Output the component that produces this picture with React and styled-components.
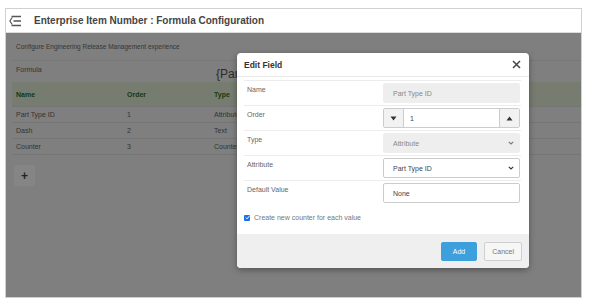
import React from 'react'
import styled, { createGlobalStyle } from 'styled-components'

const GlobalStyle = createGlobalStyle`
  html, body {
    margin: 0;
    padding: 0;
    background: #ffffff;
    font-family: "Liberation Sans", Arial, sans-serif;
  }
`

const Frame = styled.div`
  position: relative;
  margin: 8px 0 0 5px;
  width: 575px;
  height: 288px;
  border: 1px solid #d0d0d0;
  display: flex;
  flex-direction: column;
  overflow: hidden;
`

const TopBar = styled.div`
  height: 23px;
  flex-shrink: 0;
  display: flex;
  align-items: center;
  gap: 12px;
  padding-left: 3px;
  background: #ffffff;
  border-bottom: 1px solid #dcdcdc;
`

const Title = styled.h1`
  margin: 0;
  font-size: 10px;
  font-weight: bold;
  color: #444;
`

const Content = styled.div`
  position: relative;
  flex: 1;
  background: #f3f3f3;
  padding: 10px 0 0 6px;
`

const Subtitle = styled.div`
  font-size: 6.5px;
  color: #6a6a6a;
  padding-left: 4px;
  margin-bottom: 10px;
`

const FormulaRow = styled.div`
  display: flex;
  align-items: flex-start;
  height: 21px;
  border-top: 1px solid #e6e6e6;
  padding-left: 4px;
`

const FormulaLabel = styled.div`
  width: 200px;
  font-size: 7px;
  color: #666;
  padding-top: 5px;
`

const FormulaValue = styled.div`
  font-size: 12px;
  color: #555;
  padding-top: 6px;
`

const Table = styled.div`
  display: flex;
  flex-direction: column;
`

const Row = styled.div`
  display: grid;
  grid-template-columns: 111px 87px 1fr;
  align-items: center;
  height: ${p => (p.$head ? 24 : 15)}px;
  padding-left: 4px;
  font-size: 7px;
  color: ${p => (p.$head ? '#2f6f1e' : '#666')};
  font-weight: ${p => (p.$head ? 'bold' : 'normal')};
  background: ${p => (p.$head ? '#e2efd6' : 'transparent')};
  border-bottom: 1px solid #e0e0e0;
`

const AddRowButton = styled.div`
  width: 21px;
  height: 21px;
  margin: 10px 0 0 2px;
  display: flex;
  align-items: center;
  justify-content: center;
  background: #ffffff;
  border-radius: 2px;
  font-size: 12px;
  font-weight: bold;
  color: #444;
`

const Overlay = styled.div`
  position: absolute;
  inset: 0;
  background: rgba(0, 0, 0, 0.48);
`

const Modal = styled.div`
  position: absolute;
  left: 231px;
  top: 20px;
  width: 292px;
  height: 215px;
  background: #ffffff;
  border-radius: 4px;
  box-shadow: 0 2px 6px rgba(0, 0, 0, 0.35);
  display: flex;
  flex-direction: column;
  overflow: hidden;
`

const ModalHeader = styled.div`
  height: 23px;
  flex-shrink: 0;
  display: flex;
  align-items: center;
  justify-content: space-between;
  padding: 0 8px 0 7px;
  border-bottom: 1px solid #e8e8e8;
`

const ModalTitle = styled.div`
  font-size: 8.5px;
  font-weight: bold;
  color: #333;
`

const ModalBody = styled.div`
  flex: 1;
  padding: 3px 8px 0 7px;
`

const FieldRow = styled.div`
  display: flex;
  justify-content: space-between;
  height: 25px;
  padding: 2px 1px 0 3px;
  box-sizing: border-box;
  border-top: 1px solid #ececec;
`

const FieldLabel = styled.div`
  font-size: 7px;
  color: #666;
  padding-top: 3px;
`

const Field = styled.div`
  width: 137px;
  height: 20px;
  box-sizing: border-box;
  display: flex;
  align-items: center;
  justify-content: space-between;
  padding: 0 5px 0 9px;
  font-size: 7px;
  border-radius: 2px;
  color: ${p => (p.$disabled ? '#888' : '#444')};
  background: ${p => (p.$disabled ? '#eeeeee' : '#ffffff')};
  border: 1px solid ${p => (p.$disabled ? '#eeeeee' : '#cccccc')};
`

const Spinner = styled.div`
  width: 137px;
  height: 20px;
  box-sizing: border-box;
  display: flex;
  border: 1px solid #cccccc;
  border-radius: 2px;
  overflow: hidden;
`

const SpinButton = styled.div`
  width: 19px;
  display: flex;
  align-items: center;
  justify-content: center;
  background: #f2f2f2;
  border-${p => p.$side}: 1px solid #cccccc;
`

const SpinInput = styled.div`
  flex: 1;
  display: flex;
  align-items: center;
  padding-left: 6px;
  font-size: 7px;
  color: #444;
`

const CheckLine = styled.label`
  display: flex;
  align-items: center;
  gap: 4px;
  margin-top: 9px;
  font-size: 7px;
  color: #777;
`

const CheckBox = styled.span`
  width: 6px;
  height: 6px;
  border-radius: 1px;
  background: #1a73e8;
  display: flex;
  align-items: center;
  justify-content: center;
`

const ModalFooter = styled.div`
  height: 34px;
  flex-shrink: 0;
  display: flex;
  align-items: center;
  justify-content: flex-end;
  gap: 7px;
  padding-right: 7px;
  background: #efefef;
`

const Button = styled.div`
  height: 19px;
  padding: 0 ${p => (p.$primary ? 11 : 7)}px;
  display: flex;
  align-items: center;
  border-radius: 2px;
  font-size: 7px;
  box-sizing: border-box;
  color: ${p => (p.$primary ? '#ffffff' : '#777')};
  background: ${p => (p.$primary ? '#3d9fdb' : '#f6f6f6')};
  border: 1px solid ${p => (p.$primary ? '#3d9fdb' : '#cfcfcf')};
`

const Chevron = ({ color }) => (
  <svg width="6" height="4" viewBox="0 0 6 4">
    <path d="M0.8 0.8 L3 3 L5.2 0.8" fill="none" stroke={color} strokeWidth="1.1" />
  </svg>
)

const Tri = ({ up }) => (
  <svg width="7" height="5" viewBox="0 0 7 5">
    <path d={up ? 'M3.5 0.5 L6.5 4.5 L0.5 4.5 Z' : 'M0.5 0.5 L6.5 0.5 L3.5 4.5 Z'} fill="#333" />
  </svg>
)

const MenuIcon = () => (
  <svg width="13" height="12" viewBox="0 0 13 12">
    <path d="M3.2 2.5 L0.9 6 L3.2 9.5" fill="none" stroke="#555" strokeWidth="1.2" />
    <path d="M2.5 1.5 H12 M4.5 6 H12 M2.5 10.5 H12" fill="none" stroke="#555" strokeWidth="1.3" />
  </svg>
)

const CloseIcon = () => (
  <svg width="9" height="9" viewBox="0 0 9 9">
    <path d="M1 1 L8 8 M8 1 L1 8" stroke="#444" strokeWidth="1.5" />
  </svg>
)

const rows = [
  ['Part Type ID', '1', 'Attribute'],
  ['Dash', '2', 'Text'],
  ['Counter', '3', 'Counter']
]

export default function App() {
  return (
    <Frame>
      <GlobalStyle />
      <TopBar>
        <MenuIcon />
        <Title>Enterprise Item Number : Formula Configuration</Title>
      </TopBar>
      <Content>
        <Subtitle>Configure Engineering Release Management experience</Subtitle>
        <FormulaRow>
          <FormulaLabel>Formula</FormulaLabel>
          <FormulaValue>{'{Part Type ID}-{Counter}'}</FormulaValue>
        </FormulaRow>
        <Table>
          <Row $head>
            <span>Name</span>
            <span>Order</span>
            <span>Type</span>
          </Row>
          {rows.map(r => (
            <Row key={r[0]}>
              <span>{r[0]}</span>
              <span>{r[1]}</span>
              <span>{r[2]}</span>
            </Row>
          ))}
        </Table>
        <AddRowButton>+</AddRowButton>
        <Overlay />
        <Modal>
          <ModalHeader>
            <ModalTitle>Edit Field</ModalTitle>
            <CloseIcon />
          </ModalHeader>
          <ModalBody>
            <FieldRow>
              <FieldLabel>Name</FieldLabel>
              <Field $disabled>Part Type ID</Field>
            </FieldRow>
            <FieldRow>
              <FieldLabel>Order</FieldLabel>
              <Spinner>
                <SpinButton $side="right"><Tri /></SpinButton>
                <SpinInput>1</SpinInput>
                <SpinButton $side="left"><Tri up /></SpinButton>
              </Spinner>
            </FieldRow>
            <FieldRow>
              <FieldLabel>Type</FieldLabel>
              <Field $disabled>
                Attribute
                <Chevron color="#777" />
              </Field>
            </FieldRow>
            <FieldRow>
              <FieldLabel>Attribute</FieldLabel>
              <Field>
                Part Type ID
                <Chevron color="#333" />
              </Field>
            </FieldRow>
            <FieldRow>
              <FieldLabel>Default Value</FieldLabel>
              <Field>None</Field>
            </FieldRow>
            <CheckLine>
              <CheckBox>
                <svg width="5" height="5" viewBox="0 0 5 5">
                  <path d="M0.8 2.6 L2 3.8 L4.3 1.1" fill="none" stroke="#fff" strokeWidth="1" />
                </svg>
              </CheckBox>
              Create new counter for each value
            </CheckLine>
          </ModalBody>
          <ModalFooter>
            <Button $primary>Add</Button>
            <Button>Cancel</Button>
          </ModalFooter>
        </Modal>
      </Content>
    </Frame>
  )
}
